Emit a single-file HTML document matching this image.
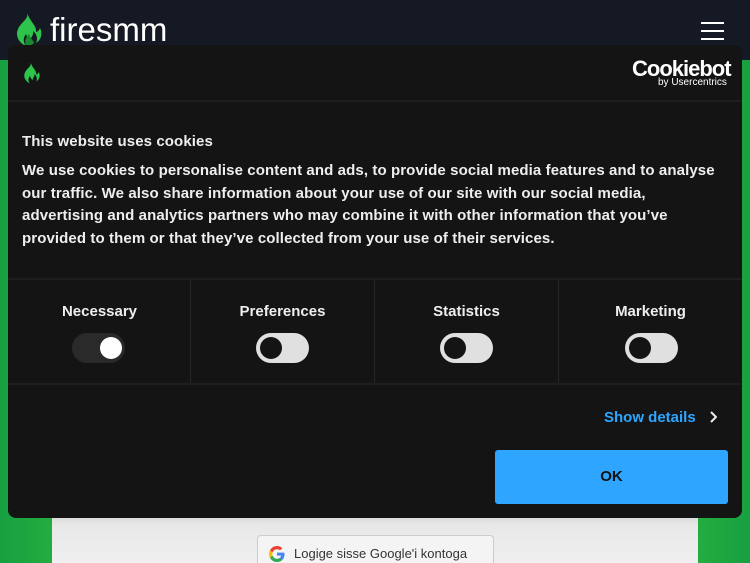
<!DOCTYPE html>
<html><head><meta charset="utf-8"><style>
*{margin:0;padding:0;box-sizing:border-box}
html,body{width:750px;height:563px;overflow:hidden}
body{position:relative;font-family:"Liberation Sans",sans-serif;background:#3fbf3f;}
.bg{position:absolute;left:0;top:60px;width:750px;height:503px;background:linear-gradient(90deg,#17a040 0%,#3cc43c 20%,#3cc43c 80%,#17a040 100%);}
.card{position:absolute;left:52px;top:500px;width:646px;height:63px;background:linear-gradient(#b8c4b8,#e8e8e8 40%,#efefef);}
.gbtn{position:absolute;left:257px;top:535px;width:237px;height:40px;border:1px solid #ccc;border-radius:4px;background:#f4f4f4;font-size:13px;color:#333;padding:10px 0 0 36px;}
.hdr{position:absolute;left:0;top:0;width:750px;height:60px;background:#141923;}
.logo{position:absolute;left:50px;top:11px;color:#fff;font-size:33px;letter-spacing:0px;}
.burger{position:absolute;left:701px;top:22px;width:23px;}
.burger div{height:2px;background:#fff;margin-bottom:6px}
.dlg{position:absolute;left:8px;top:45px;width:734px;height:473px;background:#141414;border-radius:8px;color:#eee;}
.sep{position:absolute;left:0;width:734px;height:2px;background:#1e1e1e}
.vsep{position:absolute;top:235px;width:1px;height:104px;background:#262626}
h1{position:absolute;left:14px;top:88px;font-size:15px;font-weight:bold;letter-spacing:0.1px}
p{position:absolute;left:14px;top:115px;width:720px;white-space:nowrap;font-size:15px;font-weight:bold;line-height:22.7px;letter-spacing:0.1px}
.col{position:absolute;top:258px;width:183px;text-align:center;font-size:15px;font-weight:bold;}
.tg{position:absolute;top:288px;width:53px;height:30px;border-radius:15px;background:#e0e0e0}
.tg i{position:absolute;left:4px;top:4px;width:22px;height:22px;border-radius:50%;background:#141414}
.ok{position:absolute;left:487px;top:405px;width:233px;height:54px;background:#2ea6ff;border-radius:3px;color:#111;font-weight:bold;font-size:15px;text-align:center;line-height:54px}
.sd{position:absolute;left:596px;top:364px;color:#2ea6ff;font-weight:bold;font-size:15px;}
</style></head><body>
<div class="bg"></div>
<div class="card"></div>
<div class="gbtn"><svg style="position:absolute;left:10px;top:9px" width="18" height="18" viewBox="0 0 18 18"><path d="M16.5 9.2c0-.6-.1-1.1-.2-1.6H9v3h4.2c-.2 1-.8 1.8-1.6 2.4v2h2.6c1.5-1.4 2.3-3.4 2.3-5.8z" fill="#4285f4"/><path d="M9 17c2.2 0 4-.7 5.2-2l-2.6-2c-.7.5-1.6.8-2.6.8-2 0-3.8-1.4-4.4-3.2H2v2C3.3 15.3 6 17 9 17z" fill="#34a853"/><path d="M4.6 10.6c-.2-.5-.3-1-.3-1.6s.1-1.1.3-1.6v-2H2C1.4 6.5 1 7.7 1 9s.4 2.5 1 3.6z" fill="#fbbc05"/><path d="M9 4.2c1.2 0 2.2.4 3 1.2l2.3-2.3C12.9 1.8 11.1 1 9 1 6 1 3.3 2.7 2 5.4l2.6 2C5.2 5.6 7 4.2 9 4.2z" fill="#ea4335"/></svg>Logige sisse Google'i kontoga</div>
<div class="hdr">
<svg style="position:absolute;left:15px;top:13px" width="27" height="33" viewBox="0 0 27 33"><path d="M12 0C14 6 6 9 3 16c-3 7 1 14 8 17-3-4-3-8 0-12 1 4 3 5 4 7 1-4 4-6 3-10 4 3 5 8 3 12 5-3 7-9 4-15-1 3-3 4-4 4 1-6-5-9-9-19z" fill="#2ec34a"/><path d="M11 33c-2-5 0-9 3-12 1 4 4 6 5 9-2 2-5 3-8 3z" fill="#1a8a30"/></svg>
<div class="logo">firesmm</div>
<div class="burger"><div></div><div></div><div></div></div>
</div>
<div class="dlg">
<svg style="position:absolute;left:15px;top:17px" width="17" height="22" viewBox="0 0 27 33"><path d="M12 0C14 6 6 9 3 16c-3 7 1 14 8 17-3-4-3-8 0-12 1 4 3 5 4 7 1-4 4-6 3-10 4 3 5 8 3 12 5-3 7-9 4-15-1 3-3 4-4 4 1-6-5-9-9-19z" fill="#2ec34a"/></svg>
<div style="position:absolute;left:624px;top:11px;font-size:22px;font-weight:bold;color:#fff;letter-spacing:-1px">Cookiebot</div>
<div style="position:absolute;left:650px;top:32px;font-size:10px;color:#fff">by Usercentrics</div>
<div class="sep" style="top:55px"></div>
<h1>This website uses cookies</h1>
<p>We use cookies to personalise content and ads, to provide social media features and to analyse<br>our traffic. We also share information about your use of our site with our social media,<br>advertising and analytics partners who may combine it with other information that you’ve<br>provided to them or that they’ve collected from your use of their services.</p>
<div class="sep" style="top:233px"></div>
<div class="vsep" style="left:182px"></div><div class="vsep" style="left:366px"></div><div class="vsep" style="left:550px"></div>
<div class="col" style="left:0">Necessary</div>
<div class="col" style="left:183px">Preferences</div>
<div class="col" style="left:367px">Statistics</div>
<div class="col" style="left:551px">Marketing</div>
<div class="tg" style="left:64px;background:#2a2a2a"><i style="left:28px;background:#fff"></i></div>
<div class="tg" style="left:248px"><i></i></div>
<div class="tg" style="left:432px"><i></i></div>
<div class="tg" style="left:617px"><i></i></div>
<div class="sep" style="top:338px"></div>
<div class="sd">Show details</div>
<svg style="position:absolute;left:701px;top:365px" width="8" height="14" viewBox="0 0 8 14"><path d="M2 2l5 5-5 5" stroke="#eee" stroke-width="2" fill="none"/></svg>
<div class="ok">OK</div>
</div>
</body></html>
